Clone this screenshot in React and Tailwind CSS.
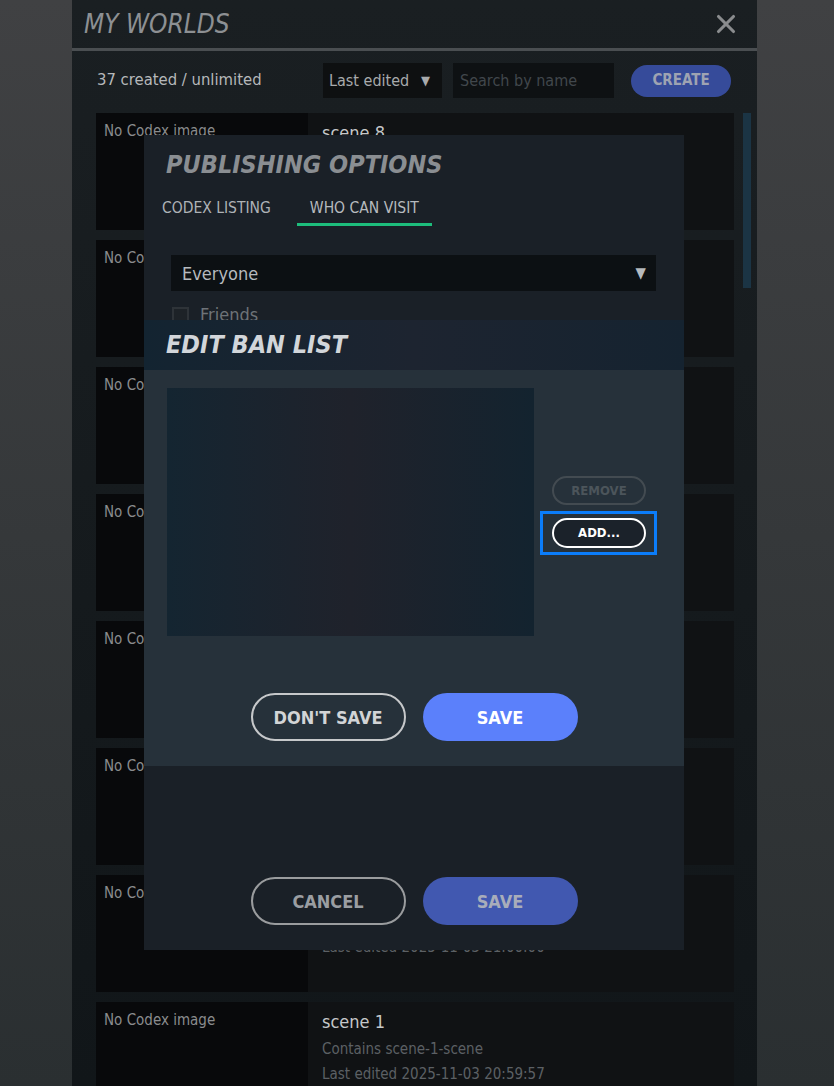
import { X } from "lucide-react";

const font = { fontFamily: '"DejaVu Sans Condensed", "Liberation Sans Narrow", "Liberation Sans", sans-serif' };

const worlds = [
  { name: "scene 8", scene: "scene-8-scene", edited: "2025-11-03 21:14:22" },
  { name: "scene 7", scene: "scene-7-scene", edited: "2025-11-03 21:12:40" },
  { name: "scene 6", scene: "scene-6-scene", edited: "2025-11-03 21:10:05" },
  { name: "scene 5", scene: "scene-5-scene", edited: "2025-11-03 21:07:31" },
  { name: "scene 4", scene: "scene-4-scene", edited: "2025-11-03 21:05:12" },
  { name: "scene 3", scene: "scene-3-scene", edited: "2025-11-03 21:02:48" },
  { name: "scene 2", scene: "scene-2-scene", edited: "2025-11-03 21:00:00" },
  { name: "scene 1", scene: "scene-1-scene", edited: "2025-11-03 20:59:57" },
];

const WorldCard = ({ world }) => (
  <div className="flex h-[117px] shrink-0">
    <div className="w-[212px] bg-[#08090b] px-2 pt-[7px] text-[15px] text-[#8a8c8e]">No Codex image</div>
    <div className="flex-1 bg-[#101214] px-[14px] pt-[6px]">
      <div className="text-[18px] text-[#c6c8ca]">{world.name}</div>
      <div className="mt-[3px] text-[15px] text-[#5c6064]">Contains {world.scene}</div>
      <div className="mt-[2px] text-[15px] text-[#5c6064]">Last edited {world.edited}</div>
    </div>
  </div>
);

const PillButton = ({ children, className }) => (
  <button className={"h-[48px] w-[155px] rounded-full text-[18px] font-bold " + className}>{children}</button>
);

export default function App() {
  return (
    <div style={font} className="h-[1086px] w-[834px] overflow-hidden bg-gradient-to-b from-[#404143] to-[#2a2f31]">
      <div className="relative ml-[72px] flex h-full w-[685px] flex-col bg-gradient-to-b from-[#1a1f22] to-[#111619]">
        <div className="flex h-[48px] shrink-0 items-center justify-between pl-[12px] pr-[16px]">
          <h1 className="text-[26px] italic text-[#8d9093]">MY WORLDS</h1>
          <X size={30} strokeWidth={2.5} className="text-[#8a8c8e]" />
        </div>
        <div className="h-[3px] shrink-0 bg-[#4a4e51]" />

        <div className="flex h-[59px] shrink-0 items-center pl-[25px]">
          <span className="w-[226px] text-[16.5px] text-[#b6b8ba]">37 created / unlimited</span>
          <div className="flex h-[35px] w-[119px] items-center justify-between bg-[#0e1011] pl-[6px] pr-[12px] text-[16px] text-[#a8aaac]">
            <span>Last edited</span>
            <span className="text-[13px]">▼</span>
          </div>
          <div className="ml-[11px] flex h-[35px] w-[161px] items-center bg-[#0e1113] pl-[7px] text-[16px] text-[#41474c]">
            Search by name
          </div>
          <button className="ml-[17px] h-[32px] w-[100px] rounded-full bg-[#364b9a] text-[15px] font-bold text-[#9ea3b2]">CREATE</button>
        </div>

        <div className="flex min-h-0 flex-1 pl-[24px] pt-[3px]">
          <div className="flex w-[638px] flex-col gap-[10px]">
            {worlds.map((w) => (
              <WorldCard key={w.name} world={w} />
            ))}
          </div>
          <div className="ml-[9px] h-[175px] w-[8px] bg-[#1b3444]" />
        </div>

        {/* publishing options dialog */}
        <div className="absolute left-[72px] top-[135px] flex h-[815px] w-[540px] flex-col bg-[#1a2027]">
          <h2 className="pl-[22px] pt-[16px] text-[25px] font-bold italic leading-[28px] text-[#8a8e92]">PUBLISHING OPTIONS</h2>
          <div className="mt-[20px] flex pl-[18px] text-[15.5px] leading-[18px] text-[#aeb2b6]">
            <div className="pb-[7px]">CODEX LISTING</div>
            <div className="ml-[26px] border-b-[3px] border-[#1dbd7c] px-[13px] pb-[6px] text-[#b6babe]">WHO CAN VISIT</div>
          </div>
          <div className="ml-[27px] mt-[29px] flex h-[36px] w-[485px] items-center justify-between bg-[#0c1013] pl-[11px] pr-[10px] text-[18px] text-[#b6babe]">
            <span>Everyone</span>
            <span className="text-[15px]">▼</span>
          </div>
          <div className="ml-[28px] mt-[15px] flex items-center gap-[11px] text-[18px] leading-[18px] text-[#6e7378]">
            <div className="h-[17px] w-[17px] border-2 border-[#2e3338] bg-[#1d2227]" />
            <span>Friends</span>
          </div>
          <div className="mt-auto flex justify-center gap-[17px] pb-[25px]">
            <PillButton className="border-2 border-[#9a9c9e] text-[#9a9ea2]">CANCEL</PillButton>
            <PillButton className="bg-[#4158b0] text-[#a8adba]">SAVE</PillButton>
          </div>

          {/* edit ban list dialog */}
          <div className="absolute left-0 top-[185px] flex h-[446px] w-[540px] flex-col bg-[#26313a]">
            <div className="flex h-[50px] shrink-0 items-center bg-gradient-to-r from-[#132431] via-[#1d2430] to-[#152330] pl-[22px]">
              <h2 className="text-[25px] font-bold italic leading-[28px] text-[#d2d6da]">EDIT BAN LIST</h2>
            </div>
            <div className="flex pl-[23px] pt-[18px]">
              <div className="h-[248px] w-[367px] bg-gradient-to-r from-[#142531] via-[#1f222b] to-[#13232f]" />
              <div className="ml-[18px] flex flex-col pt-[88px]">
                <button className="h-[29px] w-[94px] rounded-full border-2 border-[#434b51] text-[13px] font-bold text-[#4c555b]">REMOVE</button>
                <div className="-ml-[12px] mt-[6px] w-[117px] border-[3px] border-[#0b7dfa] px-[9px] py-[4px]">
                  <button className="h-[30px] w-[94px] rounded-full border-2 border-white bg-[#1b222a] text-[13px] font-bold text-white">ADD...</button>
                </div>
              </div>
            </div>
            <div className="mt-[57px] flex justify-center gap-[17px]">
              <PillButton className="border-2 border-[#c6c8ca] text-[#d2d4d6]">DON'T SAVE</PillButton>
              <PillButton className="bg-[#5b80fb] text-white">SAVE</PillButton>
            </div>
          </div>
        </div>
      </div>
    </div>
  );
}
